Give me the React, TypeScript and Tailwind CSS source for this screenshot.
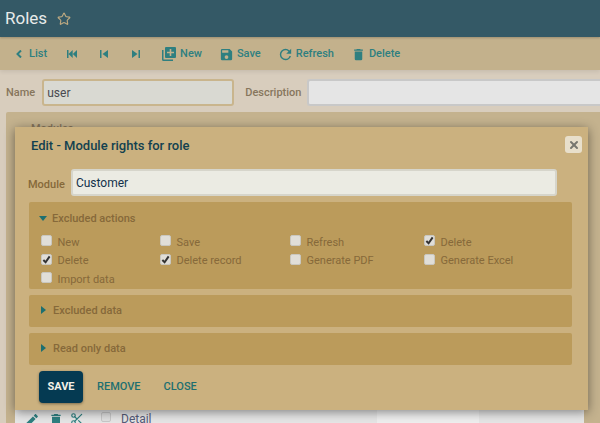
import { Star, Scissors, X } from 'lucide-react';

const font = 'font-[Roboto,"Liberation_Sans",sans-serif]';

function Mdi({ d, size, className }: { d: string; size: number; className?: string }) {
  return (
    <svg width={size} height={size} viewBox="0 0 24 24" fill="currentColor" className={`shrink-0 ${className ?? ''}`}>
      <path d={d} />
    </svg>
  );
}

const saveIcon = 'M15 9H5V5h10m-3 14a3 3 0 0 1-3-3 3 3 0 0 1 3-3 3 3 0 0 1 3 3 3 3 0 0 1-3 3m5-16H5a2 2 0 0 0-2 2v14a2 2 0 0 0 2 2h14a2 2 0 0 0 2-2V7z';
const trashIcon = 'M19 4h-3.5l-1-1h-5l-1 1H5v2h14M6 19a2 2 0 0 0 2 2h8a2 2 0 0 0 2-2V7H6z';
const refreshIcon = 'M17.65 6.35A7.958 7.958 0 0 0 12 4a8 8 0 0 0-8 8 8 8 0 0 0 8 8c3.73 0 6.84-2.55 7.73-6h-2.08A5.99 5.99 0 0 1 12 18a6 6 0 0 1-6-6 6 6 0 0 1 6-6c1.66 0 3.14.69 4.22 1.78L13 11h7V4z';
const pencilIcon = 'M20.71 7.04c.39-.39.39-1.04 0-1.41l-2.34-2.34c-.37-.39-1.02-.39-1.41 0l-1.84 1.83 3.75 3.75M3 17.25V21h3.75L17.81 9.93l-3.75-3.75L3 17.25z';

function Check({ label, checked }: { label: string; checked?: boolean }) {
  return (
    <div className="flex h-[18.5px] items-center gap-[5.5px]">
      <span className="mb-[4px] flex size-[11px] items-center justify-center rounded-[2px] border border-[#c9c7c0] bg-[#e0ded8]">
        {checked && (
          <svg width="9" height="9" viewBox="0 0 10 10">
            <path d="M1.5 5.5 L4 8 L8.5 1.5" fill="none" stroke="#333" strokeWidth="2.2" />
          </svg>
        )}
      </span>
      <span className="text-[11px] text-[#86693a]">{label}</span>
    </div>
  );
}

function Section({ title }: { title: string }) {
  return (
    <div className="flex h-[32px] items-center rounded-[2px] bg-[#bb9b5b] pl-[12px]">
      <span className="mb-[2px] h-0 w-0 border-y-[4px] border-l-[5px] border-y-transparent border-l-[#1d6f70]" />
      <span className="ml-[7px] mt-[1px] text-[11px] font-medium text-[#86693a]">{title}</span>
    </div>
  );
}

export default function App() {
  return (
    <div className={`relative h-[423px] w-[600px] overflow-hidden bg-[#d8cdbd] ${font}`}>
      <header className="relative z-10 flex h-[37px] items-center bg-[#345966] pl-[5px] shadow-[0_1px_2px_rgba(0,0,0,0.2)]">
        <h1 className="text-[17px] text-[#e8ebea]">Roles</h1>
        <Star size={14} className="ml-[10px] mt-[1px] text-[#bda981]" strokeWidth={2} />
      </header>

      <div className="flex h-[33px] items-center bg-[#c3b18c] pl-[16px] pt-[1px] text-[11px] font-medium text-[#2e7f80] shadow-[0_2px_4px_rgba(0,0,0,0.08)]">
        <svg width="6" height="8" viewBox="0 0 6 8" className="shrink-0">
          <path d="M5 0.5 L1.5 4 L5 7.5" fill="none" stroke="currentColor" strokeWidth="2" />
        </svg>
        <span className="ml-[7px]">List</span>
        <svg width="10" height="8" viewBox="0 0 10 8" fill="currentColor" className="ml-[20px] shrink-0">
          <path d="M0 0h1.5v8H0zM1.5 4L5.7 0v8zM5.8 4L10 0v8z" />
        </svg>
        <svg width="8" height="8" viewBox="0 0 8 8" fill="currentColor" className="ml-[23px] shrink-0">
          <path d="M0 0h1.5v8H0zM2.5 4L8 0v8z" />
        </svg>
        <svg width="8" height="8" viewBox="0 0 8 8" fill="currentColor" className="ml-[24px] shrink-0">
          <path d="M0 0L5.5 4L0 8zM6.5 0H8v8H6.5z" />
        </svg>
        <svg width="14" height="14" viewBox="0 0 14 14" fill="currentColor" className="ml-[22px] shrink-0">
          <path d="M0 3h1.5v9.5h9.5V14H1.5A1.5 1.5 0 0 1 0 12.5z" />
          <path fillRule="evenodd" d="M4 0h9a1 1 0 0 1 1 1v9a1 1 0 0 1-1 1H4a1 1 0 0 1-1-1V1a1 1 0 0 1 1-1zM7.7 2v2.7H5v1.6h2.7V9h1.6V6.3H12V4.7H9.3V2z" />
        </svg>
        <span className="ml-[4px]">New</span>
        <Mdi d={saveIcon} size={15} className="ml-[17px]" />
        <span className="ml-[3px]">Save</span>
        <Mdi d={refreshIcon} size={17} className="ml-[16px]" />
        <span className="ml-[2px]">Refresh</span>
        <Mdi d={trashIcon} size={15} className="ml-[17px]" />
        <span className="ml-[3px]">Delete</span>
      </div>

      <div className="flex h-[42px] items-center pl-[6px] pt-[2px] text-[11px] font-medium text-[#87765c]">
        <span className="mt-[3px]">Name</span>
        <div className="ml-[7px] flex h-[27px] w-[192px] items-center rounded-[3px] border-2 border-[#c9b58d] bg-[#d9d9d2] pl-[3px] pt-[2px] text-[12px] font-normal text-[#4a4a50]">
          user
        </div>
        <span className="ml-[11px] mt-[3px]">Description</span>
        <div className="ml-[6px] h-[27px] flex-1 rounded-l-[3px] border-2 border-r-0 border-[#c8c8c8] bg-[#e5e5e5]" />
      </div>

      <div className="ml-[6px] flex h-[311px] flex-col justify-between rounded-tl-[2px] bg-[#c4b28e] pl-[9px] pt-[9px]">
        <div className="flex items-center text-[11px] font-medium text-[#87765c]">
          <span className="ml-[2px] h-0 w-0 border-x-[4px] border-t-[5px] border-x-transparent border-t-[#1d6f70]" />
          <span className="ml-[6px]">Modules</span>
        </div>

        {/* table row, mostly behind the dialog */}
        <div className="flex h-[13px] w-[569px] overflow-hidden text-[#2e7f80]">
          <div className="flex w-[362px] items-start bg-[#e6e6e6] pl-[8px] pt-[2px]">
            <Mdi d={pencilIcon} size={17} />
            <Mdi d={trashIcon} size={16} className="ml-[8px]" />
            <Scissors size={14} strokeWidth={2} className="ml-[6px] shrink-0" />
            <span className="ml-[17px] size-[10px] shrink-0 rounded-[2px] border border-[#c8c8c8] bg-[#e0e0e0]" />
            <span className="ml-[10px] text-[12px] leading-[14px] text-[#555b78]">Detail</span>
          </div>
          <div className="w-[102px] bg-[#efefef]" />
          <div className="flex-1 bg-[#e6e6e6]" />
        </div>
      </div>

      {/* dialog */}
      <div className="absolute left-[15px] top-[127px] h-[283px] w-[573px] bg-[#cbb17f] pl-[14px] pr-[16px] pt-[10px] shadow-[0_2px_10px_rgba(0,0,0,0.45)]">
        <h2 className="ml-[2px] mt-[1px] text-[13px] font-medium leading-[16px] text-[#12414f]">Edit - Module rights for role</h2>
        <button className="absolute right-[6px] top-[9px] flex size-[17px] items-center justify-center rounded-[3px] bg-[#e8dfcb] text-[#77776f]">
          <X size={12} strokeWidth={4} />
        </button>

        <div className="mt-[15px] flex items-center">
          <span className="ml-[-1px] mt-[5px] text-[11px] font-medium text-[#86693a]">Module</span>
          <div className="ml-[6px] flex h-[27px] w-[486px] items-center rounded-[3px] border-2 border-[#d6d5cb] bg-[#ebebe3] pl-[3px] pt-[1px] text-[12px] text-[#12314a]">
            Customer
          </div>
        </div>

        <div className="mt-[6px] flex flex-col gap-[6px]">
          <div className="h-[87px] rounded-[2px] bg-[#bb9b5b] pl-[10px] pr-[4px] pt-[9px]">
            <div className="flex items-center">
              <span className="mb-[1px] h-0 w-0 border-x-[4.5px] border-t-[5px] border-x-transparent border-t-[#1d6f70]" />
              <span className="ml-[5px] text-[11px] font-medium text-[#86693a]">Excluded actions</span>
            </div>
            <div className="mt-[6px] grid grid-cols-[119px_130px_134px_1fr] pl-[2px]">
              <Check label="New" />
              <Check label="Save" />
              <Check label="Refresh" />
              <Check label="Delete" checked />
              <Check label="Delete" checked />
              <Check label="Delete record" checked />
              <Check label="Generate PDF" />
              <Check label="Generate Excel" />
              <Check label="Import data" />
            </div>
          </div>
          <Section title="Excluded data" />
          <Section title="Read only data" />
        </div>

        <div className="mt-[6px] flex items-center pl-[10px] text-[11px] font-medium">
          <button className="h-[32px] w-[44px] rounded-[4px] bg-[#053a52] font-bold text-[#f2efe6] shadow-[0_1px_3px_rgba(0,0,0,0.4)]">
            SAVE
          </button>
          <span className="ml-[14px] text-[#1d6f70]">REMOVE</span>
          <span className="ml-[23px] text-[#1d6f70]">CLOSE</span>
        </div>
      </div>
    </div>
  );
}
